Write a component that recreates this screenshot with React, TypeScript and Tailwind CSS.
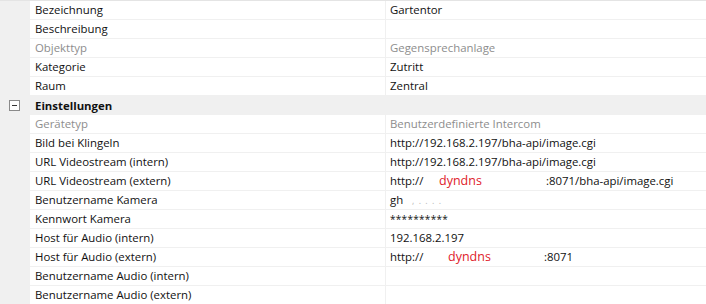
import { ReactNode } from 'react';

type Row = {
  label: string;
  value?: ReactNode;
  muted?: boolean;
};

const Redact = ({ w, children }: { w: number; children?: ReactNode }) => (
  <span className="inline-block text-[#e0202a] text-[12.5px]" style={{ width: w }}>
    {children}
  </span>
);

const general: Row[] = [
  { label: 'Bezeichnung', value: 'Gartentor' },
  { label: 'Beschreibung' },
  { label: 'Objekttyp', value: 'Gegensprechanlage', muted: true },
  { label: 'Kategorie', value: 'Zutritt' },
  { label: 'Raum', value: 'Zentral' },
];

const settings: Row[] = [
  { label: 'Gerätetyp', value: 'Benutzerdefinierte Intercom', muted: true },
  { label: 'Bild bei Klingeln', value: 'http://192.168.2.197/bha-api/image.cgi' },
  { label: 'URL Videostream (intern)', value: 'http://192.168.2.197/bha-api/image.cgi' },
  {
    label: 'URL Videostream (extern)',
    value: (
      <>
        <span className="inline-block w-[49px]">http://</span>
        <Redact w={107}>dyndns</Redact>
        :8071/bha-api/image.cgi
      </>
    ),
  },
  {
    label: 'Benutzername Kamera',
    value: (
      <>
        <span className="inline-block w-[22px]">gh</span>
        <span className="text-[#b8b8b8] text-[9px] tracking-[1px]">, . . . .</span>
      </>
    ),
  },
  { label: 'Kennwort Kamera', value: <span className="text-[10px] tracking-[0.3px]">**********</span> },
  { label: 'Host für Audio (intern)', value: '192.168.2.197' },
  {
    label: 'Host für Audio (extern)',
    value: (
      <>
        <span className="inline-block w-[58px]">http://</span>
        <Redact w={96}>dyndns</Redact>
        :8071
      </>
    ),
  },
  { label: 'Benutzername Audio (intern)' },
  { label: 'Benutzername Audio (extern)' },
];

function PropRow({ label, value, muted }: Row) {
  const tone = muted ? 'text-[#8d8d8d]' : 'text-[#111]';
  return (
    <div className="flex h-[19px] border-b border-[#f0f0f0]">
      <div className="w-[30px] shrink-0 bg-[#f0f0f0]" />
      <div className={`w-[356px] shrink-0 pl-[5px] leading-[18px] border-r border-[#f0f0f0] ${tone}`}>
        {label}
      </div>
      <div className={`flex-1 pl-[4px] leading-[18px] whitespace-nowrap ${tone}`}>{value}</div>
    </div>
  );
}

function CategoryRow({ label }: { label: string }) {
  return (
    <div className="flex h-[19px] items-center bg-[#f0f0f0]">
      <div className="w-[30px] shrink-0 flex items-center justify-center pr-[2px]">
        <svg width="11" height="11" viewBox="0 0 11 11">
          <rect x="0.5" y="0.5" width="10" height="10" fill="#fff" stroke="#8a8a8a" />
          <path d="M3 5.5h5" stroke="#333" />
        </svg>
      </div>
      <div className="pl-[5px] font-bold text-[#111]">{label}</div>
    </div>
  );
}

export default function App() {
  return (
    <div
      className="w-[706px] h-[304px] overflow-hidden bg-white text-[11.4px]"
      style={{ fontFamily: '"Open Sans", "Noto Sans", sans-serif' }}
    >
      <div className="h-0 border-t border-[#e4e4e4]" />
      {general.map((r) => (
        <PropRow key={r.label} {...r} />
      ))}
      <CategoryRow label="Einstellungen" />
      {settings.map((r) => (
        <PropRow key={r.label} {...r} />
      ))}
    </div>
  );
}
